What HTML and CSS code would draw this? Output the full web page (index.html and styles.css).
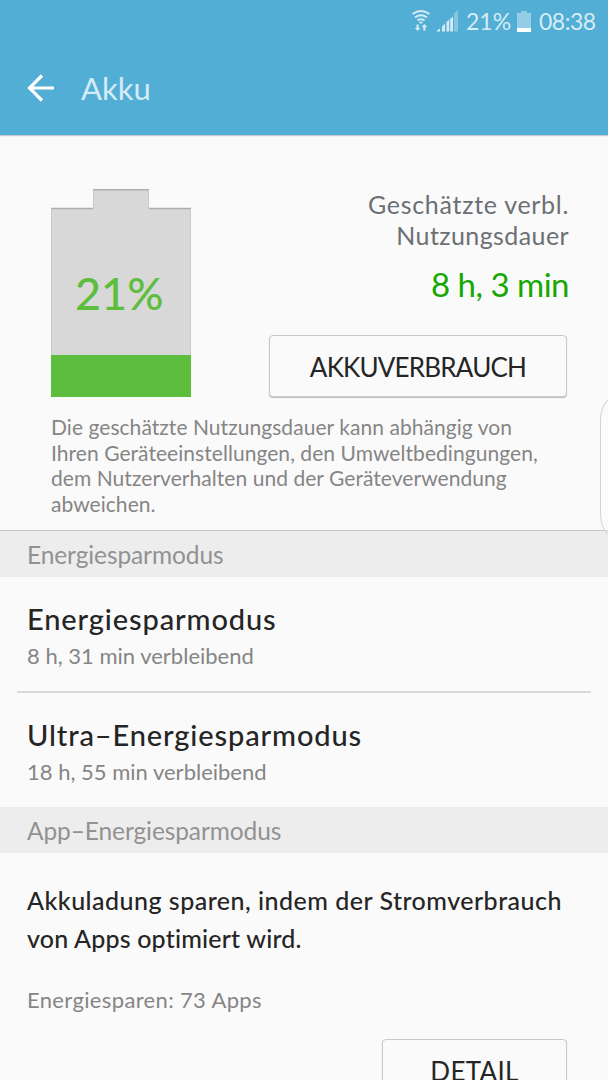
FILE: index.html
```html
<!DOCTYPE html>
<html lang="de">
<head>
  <meta charset="UTF-8">
  <meta name="viewport" content="width=device-width, initial-scale=1.0">
  <title>Akku</title>
  <link rel="stylesheet" href="styles.css">
</head>
<body>

<div class="status-bar">
  <svg class="wifi-icon" width="20" height="22" viewBox="0 0 20 22">
    <g fill="none" stroke="currentColor" stroke-width="1.9">
      <path d="M1.500 4Q10 -2 18.500 4"/>
      <path d="M4 7.400Q10 3 16 7.400"/>
      <path d="M6.500 10.500Q10 8 13.500 10.500"/>
    </g>
    <path d="M8 12L10 14.200L12 12Q10 10.800 8 12Z" fill="currentColor"/>
    <path d="M5.500 14.500h2.200v3.500h1.800l-2.900 3l-2.900 -3h1.800zM12.300 20.500h2.200v-3.500h1.800l-2.900 -3l-2.900 3h1.800z" fill="currentColor"/>
  </svg>
  <svg class="signal-icon" width="21" height="22" viewBox="0 0 21 22">
    <path d="M0 21.500v-1l3-2v3zM5 21.500v-5l3-3v8zM9.500 21.500v-9.500l2.700-2.500v12zM13.200 21.500v-12.500l2.800-2.500v15z" fill="currentColor"/>
    <path d="M17 21.500v-18l4-3.500v21.500z" fill="currentColor" opacity="0.4"/>
  </svg>
  <span class="status-percent">21%</span>
  <svg class="status-battery" width="14" height="21" viewBox="0 0 14 21">
    <path d="M0 2h4v-2h6v2h4v15h-14z" fill="currentColor" opacity="0.5"/>
    <path d="M0 17h14v4h-14z" fill="#fff"/>
  </svg>
  <span class="status-time">08:38</span>
</div>

<header class="app-bar">
  <svg class="back-icon" width="28" height="28" viewBox="0 0 28 28">
    <path d="M15 1.500L2.500 14L15 26.500M2.500 14H27" fill="none" stroke="#fff" stroke-width="3.200"/>
  </svg>
  <h1>Akku</h1>
</header>

<section class="overview">
  <div class="overview-top">
    <div class="battery">
      <svg class="battery-shape" width="140" height="208" viewBox="0 0 140 208">
        <path d="M0 19H42V0H98V19H140V208H0Z" fill="#d8d8d8"/>
        <path d="M0 19.500H42M42 0.700H98M98 19.500H140" stroke="#adadad" stroke-width="1.500"/>
        <path d="M0.500 20V166M139.500 20V166M42.500 2V19M97.500 2V19" stroke="#cacaca"/>
        <path d="M0 166H140V208H0Z" fill="#5dbd3c"/>
      </svg>
      <span class="battery-percent">21%</span>
    </div>
    <div class="estimate">
      <p class="estimate-label"><span class="wide">Geschätzte verbl.</span><br>Nutzungsdauer</p>
      <p class="estimate-time">8 h, 3 min</p>
      <button class="button usage-button">AKKUVERBRAUCH</button>
    </div>
  </div>
  <p class="note">Die geschätzte Nutzungsdauer kann abhängig von<br>Ihren Geräteeinstellungen, den Umweltbedingungen,<br>dem Nutzerverhalten und der Geräteverwendung<br>abweichen.</p>
</section>

<h2 class="section-title">Energiesparmodus</h2>
<div class="row">
  <h3>Energiesparmodus</h3>
  <p>8 h, 31 min verbleibend</p>
</div>
<div class="divider"></div>
<div class="row">
  <h3>Ultra–Energiesparmodus</h3>
  <p>18 h, 55 min verbleibend</p>
</div>

<h2 class="section-title">App–Energiesparmodus</h2>
<section class="apps">
  <p class="apps-text"><span class="wide">Akkuladung sparen, indem der Stromverbrauch</span><br>von Apps optimiert wird.</p>
  <p class="apps-count">Energiesparen: 73 Apps</p>
  <button class="button detail-button">DETAIL</button>
</section>

<!-- Edge panel handle -->
<div class="edge-handle"></div>

</body>
</html>
```
FILE: styles.css
```css
* {
  box-sizing: border-box;
}

body {
  margin: 0;
  height: 1080px;
  overflow: hidden;
  background-color: #fafafa;
  color: #252525;
  font-family: Lato, "Open Sans", sans-serif;
}

h1, h2, h3, p {
  margin: 0;
  font-weight: normal;
  white-space: nowrap;
}

.status-bar {
  display: flex;
  align-items: center;
  justify-content: flex-end;
  height: 42px;
  padding-right: 12px;
  background-color: #52aed5;
  color: #d5ecf6;
  font-size: 23px;
}

.wifi-icon {
  margin-right: -1px;
}

.signal-icon {
  margin-left: 7px;
}

.status-percent {
  width: 45px;
  margin-left: 8px;
}

.status-battery {
  margin: 0 8px 0 6px;
}

.status-time {
  width: 57px;
  letter-spacing: -0.5px;
}

.app-bar {
  display: flex;
  align-items: center;
  height: 93px;
  padding: 0 27px 2px;
  background-color: #52aed5;
  box-shadow: 0 1px 1px #c9c9c9;
}

h1 {
  margin-left: 26px;
  color: #d5ecf6;
  font-size: 31px;
}

.overview {
  height: 396px;
  padding: 54px 39px 0 51px;
  border-bottom: 1px solid #c6c6c6;
}

.overview-top {
  display: flex;
  justify-content: space-between;
  height: 225px;
}

.battery {
  position: relative;
  width: 140px;
}

.battery-percent {
  position: absolute;
  top: 77px;
  left: 24px;
  color: #5dbd3c;
  font-size: 45px;
  font-weight: 500;
  line-height: 54px;
}

.estimate {
  display: flex;
  flex-direction: column;
  align-items: flex-end;
}

.estimate-label {
  color: #6c7073;
  font-size: 25px;
  line-height: 31px;
  letter-spacing: 0.4px;
  text-align: right;
}

.estimate-label .wide {
  letter-spacing: 0.7px;
}

.estimate-time {
  margin-top: 12px;
  color: #14a800;
  font-size: 33px;
  line-height: 42px;
  letter-spacing: -0.5px;
}

.button {
  padding-top: 3px;
  border: 1px solid #c8c8c8;
  border-radius: 4px;
  background-color: #fafafa;
  box-shadow: 0 1px 1px #bdbdbd;
  color: #252525;
  font-family: inherit;
  font-size: 26px;
}

.usage-button {
  width: 298px;
  height: 62px;
  margin: 30px 2px 0 0;
  letter-spacing: -0.8px;
}

.note {
  color: #858585;
  font-size: 21px;
  line-height: 25.600px;
  letter-spacing: 0.050px;
}

.section-title {
  height: 46px;
  padding-left: 27px;
  background-color: #ededed;
  color: #929292;
  font-size: 24.500px;
  line-height: 47px;
  letter-spacing: -0.100px;
}

.row {
  height: 114px;
  padding: 23px 27px 0;
}

.row h3 {
  font-size: 29px;
  font-weight: 500;
  line-height: 38px;
  letter-spacing: 0.880px;
}

.row p {
  color: #858585;
  font-size: 22px;
  line-height: 35px;
}

.divider {
  height: 2px;
  margin: 0 17px;
  background-color: #d9d9d9;
}

.apps {
  display: flex;
  flex-direction: column;
  padding: 28px 41px 0 27px;
}

.apps-text {
  font-size: 25px;
  font-weight: 500;
  line-height: 38px;
  letter-spacing: 0.180px;
}

.apps-text .wide {
  letter-spacing: 0.480px;
}

.apps-count {
  margin-top: 26px;
  color: #858585;
  font-size: 22px;
  line-height: 34px;
  letter-spacing: 0.350px;
}

.detail-button {
  align-self: flex-end;
  width: 185px;
  height: 62px;
  margin-top: 22px;
  letter-spacing: 0.300px;
}

.edge-handle {
  position: absolute;
  top: 399px;
  right: -14px;
  width: 22px;
  height: 136px;
  border: 1px solid #d2d2d2;
  border-radius: 12px / 24px;
  background-color: rgba(255, 255, 255, 0.300);
}
```
